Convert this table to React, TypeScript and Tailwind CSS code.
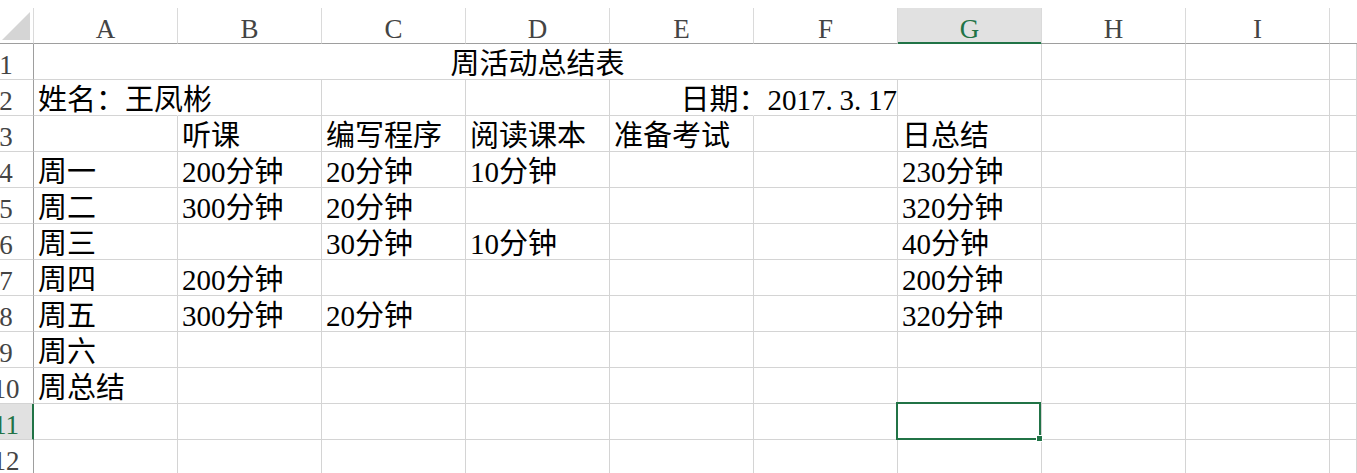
import React from "react";

const FONT = '"Liberation Serif", "Noto Sans CJK SC", serif';

type CellDef = {
  text?: React.ReactNode;
  hideRight?: boolean;
  align?: "left" | "right" | "center";
  wide?: number;
  selected?: boolean;
};

const COLS = ["A", "B", "C", "D", "E", "F", "G", "H", "I"];

function Cell({ def, last }: { def: CellDef; last?: boolean }) {
  const span = def.wide ?? 1;
  const widthClass = last ? "w-[27px]" : span === 7 ? "w-[1008px]" : "w-[144px]";
  const alignClass =
    def.align === "right"
      ? "justify-end"
      : def.align === "center"
      ? "justify-center"
      : "justify-start pl-[4px]";
  return (
    <div
      className={`relative flex h-[36px] shrink-0 items-end whitespace-nowrap border-b border-r border-b-[#d4d4d4] ${
        def.hideRight ? "border-r-transparent" : "border-r-[#d4d4d4]"
      } ${widthClass} ${alignClass} text-[29px] leading-[29px] text-black`}
    >
      <span className="relative z-10">{def.text}</span>
      {def.selected && (
        <div className="pointer-events-none absolute left-[-2px] top-[-2px] z-20 h-[38px] w-[145px] border-2 border-[#217346]">
          <div className="absolute bottom-[-4px] right-[-4px] h-[7px] w-[7px] border border-white bg-[#217346]" />
        </div>
      )}
    </div>
  );
}

function RowHeader({ n, active }: { n: number; active?: boolean }) {
  return (
    <div
      className={`relative flex h-[36px] w-[34px] shrink-0 items-end overflow-hidden border-b border-b-[#d4d4d4] ${
        active ? "border-r-2 border-r-[#217346] bg-[#e1e1e1]" : "border-r border-r-[#9e9e9e]"
      }`}
    >
      <span
        className={`ml-[-8px] w-[28px] shrink-0 text-center text-[27px] leading-[27px] ${
          active ? "text-[#217346]" : "text-[#444444]"
        }`}
      >
        {n}
      </span>
    </div>
  );
}

function Row({ n, cells, active }: { n: number; cells: CellDef[]; active?: boolean }) {
  return (
    <div className="flex">
      <RowHeader n={n} active={active} />
      {cells.map((c, i) => (
        <Cell key={i} def={c} />
      ))}
      <Cell def={{}} last />
    </div>
  );
}

const D = () => <span className="inline-block w-[14px]">.</span>;

function plain(values: string[]): CellDef[] {
  const out: CellDef[] = [];
  for (let i = 0; i < 9; i++) out.push({ text: values[i] ?? "" });
  return out;
}

export default function App() {
  const row1: CellDef[] = [{ text: "周活动总结表", wide: 7, align: "center" }, {}, {}];
  const row2: CellDef[] = [
    { text: "姓名：王凤彬", hideRight: true },
    {},
    {},
    {},
    { hideRight: true },
    {
      text: (
        <>
          日期：2017<D />3<D />17
        </>
      ),
      align: "right",
    },
    {},
    {},
    {},
  ];
  const data: string[][] = [
    ["", "听课", "编写程序", "阅读课本", "准备考试", "", "日总结"],
    ["周一", "200分钟", "20分钟", "10分钟", "", "", "230分钟"],
    ["周二", "300分钟", "20分钟", "", "", "", "320分钟"],
    ["周三", "", "30分钟", "10分钟", "", "", "40分钟"],
    ["周四", "200分钟", "", "", "", "", "200分钟"],
    ["周五", "300分钟", "20分钟", "", "", "", "320分钟"],
    ["周六"],
    ["周总结"],
  ];
  const row11 = plain([]);
  row11[6] = { selected: true };

  return (
    <div className="h-[473px] w-[1357px] overflow-hidden bg-white pt-[8px]" style={{ fontFamily: FONT }}>
      <div className="flex">
        <div className="relative h-[36px] w-[34px] shrink-0 border-b border-r border-b-[#9e9e9e] border-r-[#dadada]">
          <svg className="absolute left-0 top-0" width="33" height="35" viewBox="0 0 33 35">
            <polygon points="2,32 30,32 30,4" fill="#d5d5d5" />
          </svg>
        </div>
        {COLS.map((c) => {
          const sel = c === "G";
          return (
            <div
              key={c}
              className={`relative flex h-[36px] w-[144px] shrink-0 items-end justify-center border-b border-r border-r-[#dadada] text-[27px] leading-[27px] ${
                sel ? "border-b-[#217346] bg-[#e1e1e1] text-[#217346]" : "border-b-[#9e9e9e] text-[#444444]"
              }`}
            >
              {c}
              {sel && <div className="absolute bottom-0 left-0 h-[1px] w-full bg-[#217346]" />}
            </div>
          );
        })}
        <div className="h-[36px] w-[27px] shrink-0 border-b border-b-[#9e9e9e]" />
      </div>
      <Row n={1} cells={row1} />
      <Row n={2} cells={row2} />
      {data.map((r, i) => (
        <Row key={i} n={i + 3} cells={plain(r)} />
      ))}
      <Row n={11} cells={row11} active />
      <Row n={12} cells={plain([])} />
    </div>
  );
}
